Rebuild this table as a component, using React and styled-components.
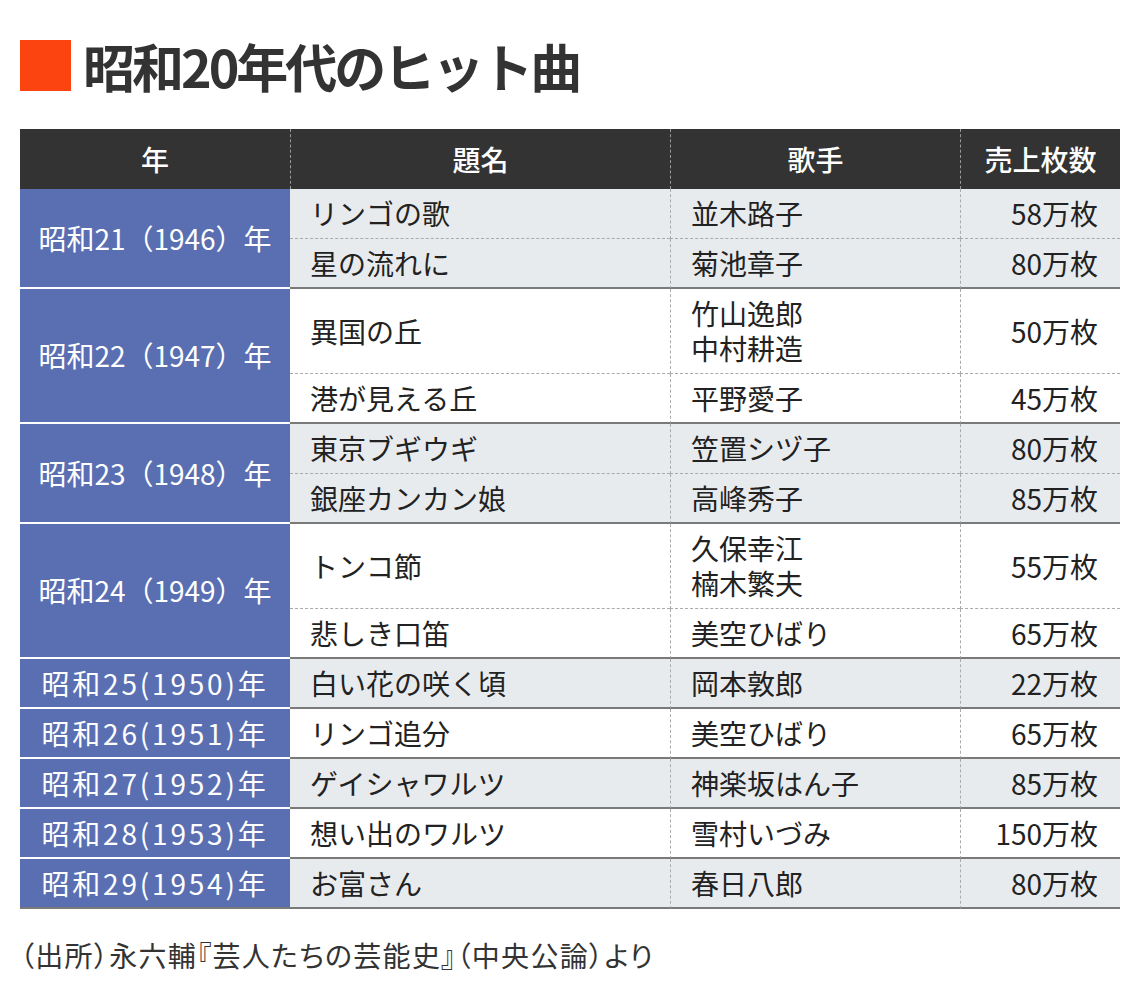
import { Fragment } from 'react';
import styled, { createGlobalStyle } from 'styled-components';

const GlobalStyle = createGlobalStyle`
    body {
        margin: 0;
        background: #fff;
        font-family: "Noto Sans CJK JP", "Noto Sans", sans-serif;
        color: #222;
    }
`;

const Page = styled.div`
    width: 1140px;
    padding: 40px 20px 0;
    box-sizing: border-box;
`;

const Heading = styled.h1`
    display: flex;
    align-items: center;
    gap: 12px;
    margin: 0 0 38px;
    height: 51px;
    font-size: 52px;
    font-weight: 700;
    letter-spacing: -3px;
    color: #333;
    line-height: 1;
`;

const Mark = styled.span`
    width: 51px;
    height: 51px;
    background: #fc4410;
    flex-shrink: 0;
`;

const Table = styled.table`
    width: 1100px;
    border-collapse: separate;
    border-spacing: 0;
    table-layout: fixed;
    font-size: 28px;
    line-height: 35px;
`;

const Head = styled.th`
    height: 60px;
    padding: 0;
    background: #333;
    color: #fff;
    font-weight: 500;
    text-align: center;
    border-left: ${p => p.$first ? 'none' : '1px dashed #9a9a9a'};
`;

const YearCell = styled.td`
    background: #5a6fb2;
    color: #fff;
    text-align: center;
    padding: 0;
    white-space: nowrap;
    letter-spacing: ${p => p.$single ? '2.8px' : '0'};
    border-bottom: 2px solid ${p => p.$last ? '#7a7a7a' : '#fff'};
`;

const Cell = styled.td`
    background: ${p => p.$shade ? '#e8ebee' : '#fff'};
    padding: 7px 20px ${p => p.$groupEnd ? '6px' : '7px'};
    text-align: ${p => p.$right ? 'right' : 'left'};
    padding-right: ${p => p.$right ? '22px' : '20px'};
    border-left: ${p => p.$divided ? '1px dashed #aaa' : 'none'};
    border-bottom: ${p => p.$groupEnd ? '2px solid #7a7a7a' : '1px dashed #aaa'};
    white-space: nowrap;
`;

const Note = styled.p`
    margin: 26px 0 0;
    font-size: 28px;
    line-height: 40px;
    font-feature-settings: "palt";
    letter-spacing: 1.3px;
    color: #333;
`;

const groups = [
    { year: '昭和21（1946）年', rows: [['リンゴの歌', ['並木路子'], '58万枚'], ['星の流れに', ['菊池章子'], '80万枚']] },
    { year: '昭和22（1947）年', rows: [['異国の丘', ['竹山逸郎', '中村耕造'], '50万枚'], ['港が見える丘', ['平野愛子'], '45万枚']] },
    { year: '昭和23（1948）年', rows: [['東京ブギウギ', ['笠置シヅ子'], '80万枚'], ['銀座カンカン娘', ['高峰秀子'], '85万枚']] },
    { year: '昭和24（1949）年', rows: [['トンコ節', ['久保幸江', '楠木繁夫'], '55万枚'], ['悲しき口笛', ['美空ひばり'], '65万枚']] },
    { year: '昭和25(1950)年', rows: [['白い花の咲く頃', ['岡本敦郎'], '22万枚']] },
    { year: '昭和26(1951)年', rows: [['リンゴ追分', ['美空ひばり'], '65万枚']] },
    { year: '昭和27(1952)年', rows: [['ゲイシャワルツ', ['神楽坂はん子'], '85万枚']] },
    { year: '昭和28(1953)年', rows: [['想い出のワルツ', ['雪村いづみ'], '150万枚']] },
    { year: '昭和29(1954)年', rows: [['お富さん', ['春日八郎'], '80万枚']] },
];

export default function App() {
    return (
        <Page>
            <GlobalStyle />
            <Heading><Mark />昭和20年代のヒット曲</Heading>
            <Table>
                <colgroup>
                    <col style={{ width: 270 }} />
                    <col style={{ width: 380 }} />
                    <col style={{ width: 290 }} />
                    <col style={{ width: 160 }} />
                </colgroup>
                <thead>
                    <tr>
                        <Head $first>年</Head>
                        <Head>題名</Head>
                        <Head>歌手</Head>
                        <Head>売上枚数</Head>
                    </tr>
                </thead>
                <tbody>
                    {groups.map((g, gi) => g.rows.map((r, ri) => {
                        const shade = gi % 2 === 0;
                        const end = ri === g.rows.length - 1;
                        return (
                            <tr key={g.year + ri}>
                                {ri === 0 && (
                                    <YearCell
                                        rowSpan={g.rows.length}
                                        $single={g.rows.length === 1}
                                        $last={gi === groups.length - 1}
                                    >
                                        {g.year}
                                    </YearCell>
                                )}
                                <Cell $shade={shade} $groupEnd={end}>{r[0]}</Cell>
                                <Cell $shade={shade} $groupEnd={end} $divided>
                                    {r[1].map((s, i) => (
                                        <Fragment key={i}>{i > 0 && <br />}{s}</Fragment>
                                    ))}
                                </Cell>
                                <Cell $shade={shade} $groupEnd={end} $divided $right>{r[2]}</Cell>
                            </tr>
                        );
                    }))}
                </tbody>
            </Table>
            <Note>（出所）永六輔『芸人たちの芸能史』（中央公論）より</Note>
        </Page>
    );
}
